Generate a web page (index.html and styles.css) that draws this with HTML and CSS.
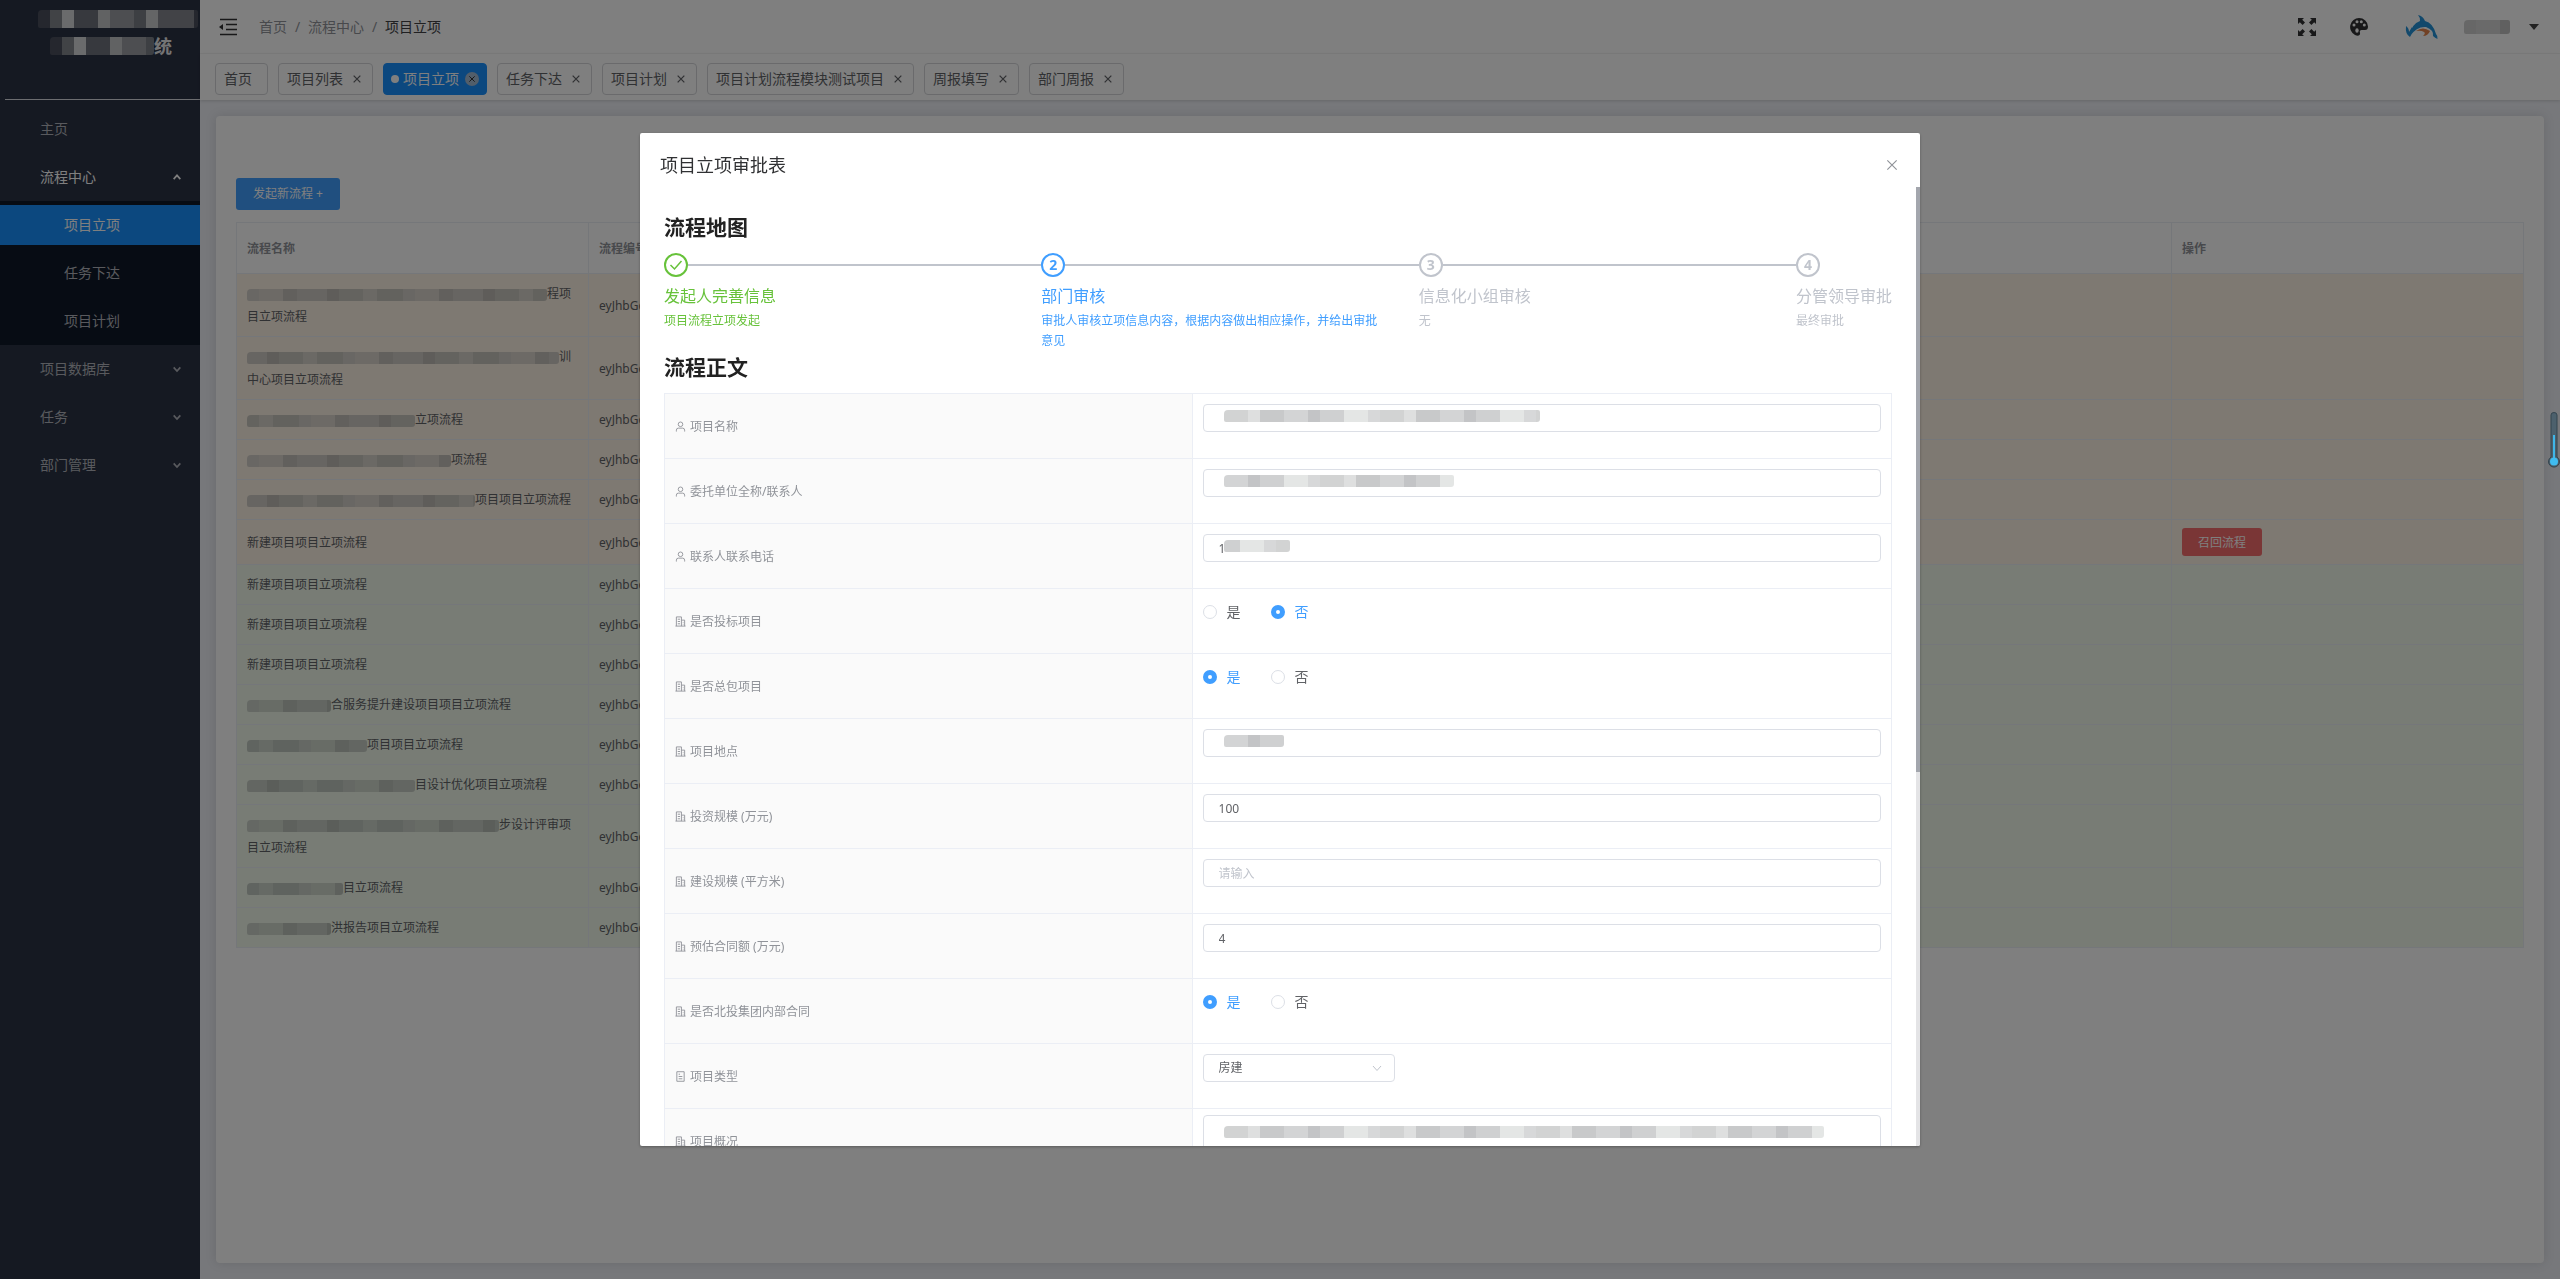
FILE: index.html
```html
<!DOCTYPE html>
<html lang="zh-CN">
<head>
<meta charset="utf-8">
<meta name="viewport" content="width=device-width, initial-scale=1">
<title>项目立项</title>
<link rel="stylesheet" href="styles.css">
</head>
<body>
<svg class="sprite" aria-hidden="true">
  <symbol id="i-user" viewBox="0 0 12 12"><circle cx="6" cy="3.6" r="2.5"/><path d="M1.5 11.5V10Q1.5 7.8 3.6 7.8H8.4Q10.5 7.8 10.5 10V11.5"/></symbol>
  <symbol id="i-office" viewBox="0 0 12 12"><path d="M0.5 11H11.5M1.5 11V1H7V11M7 4.5H10.5V11M3 3.5H5.5M3 6H5.5M3 8.5H5.5M8.5 7H9.2M8.5 9H9.2"/></symbol>
  <symbol id="i-ticket" viewBox="0 0 12 12"><path d="M2 0.8H10V11.2H2ZM4 3.5H5.5M4 6H8M4 8.5H8"/></symbol>
  <symbol id="i-down" viewBox="0 0 12 12"><path d="M2 4L6 8.5L10 4"/></symbol>
  <symbol id="i-up" viewBox="0 0 12 12"><path d="M2 8.5L6 4L10 8.5"/></symbol>
  <symbol id="i-close" viewBox="0 0 12 12"><path d="M2 2L10 10M10 2L2 10"/></symbol>
</svg>

<div class="app">
  <aside class="sidebar">
    <div class="logo">
      <span class="mask mask-logo" style="width:160px"></span>
      <div class="logo-line"><span class="mask mask-logo" style="width:104px"></span><b>统</b></div>
    </div>
    <nav class="menu">
      <a class="menu-item" href="#">主页</a>
      <a class="menu-item open" href="#">流程中心<svg class="ico"><use href="#i-up"/></svg></a>
      <div class="submenu">
        <a class="sub-item active" href="#">项目立项</a>
        <a class="sub-item" href="#">任务下达</a>
        <a class="sub-item" href="#">项目计划</a>
      </div>
      <a class="menu-item" href="#">项目数据库<svg class="ico"><use href="#i-down"/></svg></a>
      <a class="menu-item" href="#">任务<svg class="ico"><use href="#i-down"/></svg></a>
      <a class="menu-item" href="#">部门管理<svg class="ico"><use href="#i-down"/></svg></a>
    </nav>
  </aside>

  <div class="page">
    <header class="topbar">
      <button class="icon-btn" aria-label="收起菜单"><svg width="18" height="18" viewBox="0 0 18 18"><path d="M1 1.5H18M7 6.5H18M7 11.5H18M1 16.5H18" stroke="currentColor" stroke-width="1.500"/><path d="M0 9L4 6V12Z" fill="currentColor"/></svg></button>
      <nav class="crumbs"><a href="#">首页</a><i>/</i><a href="#">流程中心</a><i>/</i><span>项目立项</span></nav>
      <div class="tools">
        <button class="icon-btn" aria-label="全屏"><svg width="20" height="20" viewBox="0 0 20 20" fill="currentColor"><path d="M1 1H7L5.2 2.8L8 5.6L5.6 8L2.8 5.2L1 7ZM19 1V7L17.2 5.2L14.4 8L12 5.6L14.8 2.8L13 1ZM1 19V13L2.8 14.8L5.6 12L8 14.4L5.2 17.2L7 19ZM19 19H13L14.8 17.2L12 14.4L14.4 12L17.2 14.8L19 13Z"/></svg></button>
        <button class="icon-btn" aria-label="主题"><svg width="20" height="20" viewBox="0 0 20 20"><path d="M10 1A9 9 0 0 0 6 18Q9 19.500 10.500 18Q11.500 17 10.800 15Q10.500 13 12.500 13H16Q19 13 19 9.500A9 8.700 0 0 0 10 1Z" fill="currentColor"/><g fill="#fff"><circle cx="5" cy="8" r="1.500"/><circle cx="8" cy="4.800" r="1.500"/><circle cx="12.300" cy="4.800" r="1.500"/><circle cx="15.300" cy="8" r="1.500"/><ellipse cx="8" cy="13.500" rx="1.700" ry="2.200"/></g></svg></button>
        <svg class="avatar" width="34" height="26" viewBox="0 0 34 26"><path d="M5 22Q6 10 15 7Q15 3 13 1Q18 2 20 7Q28 9 31 20Q33 22 32.500 25Q30 24 28 22Q29 16 21 13Q12 12 5 22ZM5 23Q0 20 1 12Q4 14 4 18L7 13Q9 17 5 23Z" fill="#2492d8"/><path d="M11 17Q18 12 25 17Q23 22 18 22Q21 19 19 18Q16 16 11 17Z" fill="#e2834a"/></svg>
        <span class="mask mask-name" style="width:46px"></span>
        <svg width="10" height="6" viewBox="0 0 10 6"><path d="M0 0H10L5 6Z" fill="#444"/></svg>
      </div>
    </header>

    <nav class="tabs">
      <a class="tab" href="#">首页</a>
      <a class="tab" href="#">项目列表<svg class="ico"><use href="#i-close"/></svg></a>
      <a class="tab current" href="#"><span class="dot"></span>项目立项<svg class="ico round"><use href="#i-close"/></svg></a>
      <a class="tab" href="#">任务下达<svg class="ico"><use href="#i-close"/></svg></a>
      <a class="tab" href="#">项目计划<svg class="ico"><use href="#i-close"/></svg></a>
      <a class="tab" href="#">项目计划流程模块测试项目<svg class="ico"><use href="#i-close"/></svg></a>
      <a class="tab" href="#">周报填写<svg class="ico"><use href="#i-close"/></svg></a>
      <a class="tab" href="#">部门周报<svg class="ico"><use href="#i-close"/></svg></a>
    </nav>

    <main class="main">
      <section class="card">
        <button class="btn primary">发起新流程 +</button>
        <table class="list">
          <colgroup><col class="c-side"><col><col class="c-side"></colgroup>
          <thead><tr><th>流程名称</th><th>流程编号</th><th>操作</th></tr></thead>
          <tbody>
            <tr class="warn"><td><span class="mask" style="width:300px"></span>程项目立项流程</td><td>eyJhbGciOi</td><td></td></tr>
            <tr class="warn"><td><span class="mask b" style="width:312px"></span>训中心项目立项流程</td><td>eyJhbGciOi</td><td></td></tr>
            <tr class="warn"><td><span class="mask c" style="width:168px"></span>立项流程</td><td>eyJhbGciOi</td><td></td></tr>
            <tr class="warn"><td><span class="mask" style="width:204px"></span>项流程</td><td>eyJhbGciOi</td><td></td></tr>
            <tr class="warn"><td><span class="mask b" style="width:228px"></span>项目项目立项流程</td><td>eyJhbGciOi</td><td></td></tr>
            <tr class="warn"><td>新建项目项目立项流程</td><td>eyJhbGciOi</td><td><button class="btn danger">召回流程</button></td></tr>
            <tr class="ok"><td>新建项目项目立项流程</td><td>eyJhbGciOi</td><td></td></tr>
            <tr class="ok"><td>新建项目项目立项流程</td><td>eyJhbGciOi</td><td></td></tr>
            <tr class="ok"><td>新建项目项目立项流程</td><td>eyJhbGciOi</td><td></td></tr>
            <tr class="ok"><td><span class="mask" style="width:84px"></span>合服务提升建设项目项目立项流程</td><td>eyJhbGciOi</td><td></td></tr>
            <tr class="ok"><td><span class="mask c" style="width:120px"></span>项目项目立项流程</td><td>eyJhbGciOi</td><td></td></tr>
            <tr class="ok"><td><span class="mask b" style="width:168px"></span>目设计优化项目立项流程</td><td>eyJhbGciOi</td><td></td></tr>
            <tr class="ok"><td><span class="mask" style="width:252px"></span>步设计评审项目立项流程</td><td>eyJhbGciOi</td><td></td></tr>
            <tr class="ok"><td><span class="mask c" style="width:96px"></span>目立项流程</td><td>eyJhbGciOi</td><td></td></tr>
            <tr class="ok"><td><span class="mask" style="width:84px"></span>洪报告项目立项流程</td><td>eyJhbGciOi</td><td></td></tr>
          </tbody>
        </table>
      </section>
    </main>
  </div>
</div>

<div class="overlay">
  <div class="dialog" role="dialog" aria-labelledby="dlg-title">
    <div class="dialog-head">
      <span class="dialog-title" id="dlg-title">项目立项审批表</span>
      <button class="close" aria-label="关闭"><svg class="ico"><use href="#i-close"/></svg></button>
    </div>
    <div class="dialog-body">
      <h2>流程地图</h2>
      <ol class="steps">
        <li class="done"><div class="step-head"><b><svg width="14" height="12" viewBox="0 0 14 12"><path d="M1.500 6L5.500 10L12.500 2" fill="none" stroke="currentColor" stroke-width="1.500"/></svg></b></div><div class="step-title">发起人完善信息</div><div class="step-desc">项目流程立项发起</div></li>
        <li class="now"><div class="step-head"><b>2</b></div><div class="step-title">部门审核</div><div class="step-desc">审批人审核立项信息内容，根据内容做出相应操作，并给出审批意见</div></li>
        <li><div class="step-head"><b>3</b></div><div class="step-title">信息化小组审核</div><div class="step-desc">无</div></li>
        <li><div class="step-head"><b>4</b></div><div class="step-title">分管领导审批</div><div class="step-desc">最终审批</div></li>
      </ol>
      <h2>流程正文</h2>
      <table class="form">
        <tbody>
        <tr><th><label for="f1"><svg class="ico"><use href="#i-user"/></svg>项目名称</label></th><td><div class="field"><input id="f1" type="text"><span class="mask soft" style="width:316px"></span></div></td></tr>
        <tr><th><label for="f2"><svg class="ico"><use href="#i-user"/></svg>委托单位全称/联系人</label></th><td><div class="field"><input id="f2" type="text"><span class="mask soft b" style="width:230px"></span></div></td></tr>
        <tr><th><label for="f3"><svg class="ico"><use href="#i-user"/></svg>联系人联系电话</label></th><td><div class="field"><input id="f3" type="text" value="1"><span class="mask soft c" style="width:66px"></span></div></td></tr>
        <tr><th><svg class="ico"><use href="#i-office"/></svg>是否投标项目</th><td><div class="radios"><label><input type="radio" name="r1">是</label><label><input type="radio" name="r1" checked>否</label></div></td></tr>
        <tr><th><svg class="ico"><use href="#i-office"/></svg>是否总包项目</th><td><div class="radios"><label><input type="radio" name="r2" checked>是</label><label><input type="radio" name="r2">否</label></div></td></tr>
        <tr><th><label for="f6"><svg class="ico"><use href="#i-office"/></svg>项目地点</label></th><td><div class="field"><input id="f6" type="text"><span class="mask soft b" style="width:60px"></span></div></td></tr>
        <tr><th><label for="f7"><svg class="ico"><use href="#i-office"/></svg>投资规模 (万元)</label></th><td><input id="f7" type="text" value="100"></td></tr>
        <tr><th><label for="f8"><svg class="ico"><use href="#i-office"/></svg>建设规模 (平方米)</label></th><td><input id="f8" type="text" placeholder="请输入"></td></tr>
        <tr><th><label for="f9"><svg class="ico"><use href="#i-office"/></svg>预估合同额 (万元)</label></th><td><input id="f9" type="text" value="4"></td></tr>
        <tr><th><svg class="ico"><use href="#i-office"/></svg>是否北投集团内部合同</th><td><div class="radios"><label><input type="radio" name="r3" checked>是</label><label><input type="radio" name="r3">否</label></div></td></tr>
        <tr><th><label for="f11"><svg class="ico"><use href="#i-ticket"/></svg>项目类型</label></th><td><div class="select"><select id="f11"><option>房建</option></select><svg class="ico"><use href="#i-down"/></svg></div></td></tr>
        <tr><th><label for="f12"><svg class="ico"><use href="#i-office"/></svg>项目概况</label></th><td class="long"><div class="field"><textarea id="f12"></textarea><span class="mask soft" style="width:600px"></span></div></td></tr>
        </tbody>
      </table>
    </div>
    <div class="scrollbar"><div class="thumb"></div></div>
  </div>
</div>

<svg class="gauge" width="12" height="56" viewBox="0 0 12 56" aria-hidden="true"><path d="M3 3Q3 0.500 6 0.500Q9 0.500 9 3V45A5.500 5.500 0 1 1 3 45Z" fill="#4c606c" stroke="#33454f"/><path d="M6 23V48" stroke="#3fb6e8" stroke-width="2"/><circle cx="6" cy="49.500" r="4" fill="#3fbcf0"/></svg>
</body>
</html>
```
FILE: styles.css
```css
* { box-sizing: border-box; }
body {
  margin: 0;
  font: 14px/20px "Noto Sans", "Noto Sans CJK SC", sans-serif;
  color: #606266;
  background: #eef0f6;
}
a { color: inherit; text-decoration: none; }
button, input, select, textarea { font: inherit; color: inherit; margin: 0; }
button { padding: 0; border: 0; background: none; }
.sprite { display: none; }
.ico { width: 12px; height: 12px; fill: none; stroke: currentColor; stroke-width: 1; flex: none; }

/* redacted strips */
.mask {
  display: inline-block;
  height: 12px;
  vertical-align: middle;
  border-radius: 4px 2px 3px 2px;
  background: linear-gradient(90deg, #d3cfc8 0 12px, #dad5cd 12px 36px, #c4c1ba 36px 50px, #cfcbc4 50px 80px, #bebbb4 80px 92px, #c9c6bf 92px 116px, #d6d2ca 116px 130px, #c7c4bd 130px 156px) 0 0 / 156px 100%;
}
.mask.b { background-position: -60px 0; }
.mask.c { background-position: -104px 0; }
.ok .mask { filter: hue-rotate(60deg); }
.mask.soft {
  background-image: linear-gradient(90deg, #d2d3d3 0 24px, #dedfdf 24px 36px, #c8c9ca 36px 60px, #d3d4d5 60px 84px, #c3c4c6 84px 96px, #cfd0d1 96px 120px, #e4e6e5 120px 144px, #d7d8d9 144px 156px);
}

.app { display: flex; min-height: 100vh; }

/* sidebar */
.sidebar { width: 200px; flex: none; background: #2b3245; color: #b2b5bc; }
.logo {
  height: 100px;
  margin-left: 5px;
  padding: 8px 0 0 33px;
  border-bottom: 1px solid #d8dae0;
  line-height: 20px;
}
.logo .mask { height: 18px; }
.logo-line { display: flex; align-items: center; padding: 8px 0 0 12px; font-size: 18px; color: #e8e8ea; }
.mask-logo {
  background: linear-gradient(90deg, #4a4f5c 0 12px, #83868d 12px 24px, #d5d6d8 24px 36px, #6f737c 36px 60px, #c2c4c7 60px 72px, #9b9da3 72px 96px, #7b7f87 96px 108px, #c8cacc 108px 120px, #84878e 120px 156px) 0 0 / 156px 100%;
}
.menu { padding-top: 5px; }
.menu-item {
  display: flex;
  align-items: center;
  justify-content: space-between;
  height: 48px;
  padding: 0 18px 0 40px;
}
.menu-item.open { color: #fff; }
.menu-item .ico { width: 10px; height: 10px; stroke-width: 2; }
.submenu { display: flex; flex-direction: column; gap: 8px; padding: 4px 0; background: #0f1828; }
.sub-item { height: 40px; padding-left: 64px; line-height: 40px; }
.sub-item.active { background: #1890ff; color: #fff; }

/* header */
.page { flex: 1; min-width: 0; display: flex; flex-direction: column; }
.topbar {
  display: flex;
  align-items: center;
  height: 54px;
  padding: 0 21px 0 19px;
  background: #fff;
  border-bottom: 1px solid #f6f6f6;
}
.icon-btn { display: flex; color: #303133; }
.crumbs { display: flex; margin-left: 22px; color: #909399; }
.crumbs i { width: 21px; text-align: center; font-style: normal; }
.crumbs span { color: #404145; }
.tools { display: flex; align-items: center; margin-left: auto; }
.tools .icon-btn { margin-right: 32px; }
.avatar { margin: 0 25px 0 4px; }
.mask-name { height: 14px; margin-right: 19px; filter: grayscale(1); }
.tabs {
  display: flex;
  gap: 10px;
  height: 46px;
  padding: 9px 15px 5px;
  background: #fff;
  box-shadow: 0 1px 3px rgba(0, 0, 0, .15);
}
.tab {
  display: flex;
  align-items: center;
  height: 32px;
  padding: 0 10px 0 8px;
  border: 1px solid #d4d5d9;
  border-radius: 4px;
}
.tab:first-child { padding-right: 15px; }
.tab .ico { width: 10px; height: 10px; margin-left: 9px; stroke-width: 1.5; }
.tab.current { padding: 0 7px; background: #1890ff; border-color: #1890ff; color: #fff; }
.dot { width: 8px; height: 8px; margin-right: 4px; border-radius: 50%; background: #fff; }
.tab .round { width: 14px; height: 14px; margin-left: 6px; padding: 3px; border-radius: 50%; background: #a5bcd4; color: #333; }

/* list */
.main { flex: 1; display: flex; padding: 16px; }
.card {
  flex: 1;
  min-width: 0;
  padding: 62px 20px 20px;
  background: #fff;
  border-radius: 4px;
  box-shadow: 0 0 12px rgba(0, 0, 0, .12);
}
.btn { height: 32px; padding: 0 15px; border-radius: 3px; font-size: 12px; color: #fff; display: block; }
.primary { background: #409eff; margin-bottom: 12px; min-width: 104px; }
.danger { height: 28px; width: 80px; background: #f56c6c; }
table { border-collapse: collapse; table-layout: fixed; width: 100%; }
.list { font-size: 12px; line-height: 23px; border: 1px solid #ebeef5; }
.c-side { width: 352px; }
.list th, .list td { border: 1px solid #ebeef5; padding: 8px 10px; text-align: left; overflow: hidden; }
.list th { height: 51px; color: #909399; font-weight: 700; }
.warn { background: #fdf2e4; }
.ok { background: #f0f9eb; }

/* dialog */
.overlay {
  position: fixed;
  inset: 0;
  padding: 133px 0;
  background: rgba(0, 0, 0, .5);
}
.dialog {
  position: relative;
  display: flex;
  flex-direction: column;
  width: 50%;
  max-height: 100%;
  margin: 0 auto;
  overflow: hidden;
  background: #fff;
  border-radius: 2px;
  box-shadow: 0 1px 3px rgba(0, 0, 0, .3);
}
.dialog-head { display: flex; align-items: center; justify-content: space-between; padding: 20px 20px 10px; }
.dialog-title { font-size: 18px; line-height: 24px; color: #303133; }
.close { display: flex; padding: 1px; color: #909399; }
.close .ico { width: 14px; height: 14px; }
.dialog-body { flex: 1; min-height: 0; overflow-y: auto; scrollbar-width: none; padding: 24px 28px 24px 24px; }
.scrollbar { position: absolute; top: 54px; right: 0; bottom: 0; width: 4px; background: #e4e4e6; }
.thumb { height: 61%; background: #a3a6ad; }
h2 { margin: 0; padding: 4px 0 14px; font-size: 21px; line-height: 24px; color: #222; }

.steps { display: flex; margin: 0; padding: 0; list-style: none; color: #c0c4cc; }
.steps li { flex: 1; min-width: 0; }
.steps li:last-child { flex: none; }
.step-head { display: flex; align-items: center; }
.step-head b { display: flex; align-items: center; justify-content: center; width: 24px; height: 24px; border: 2px solid currentColor; border-radius: 50%; }
.step-head::after { content: ""; flex: 1; height: 2px; background: #c0c4cc; }
.steps li:last-child .step-head::after { content: none; }
.step-title { font-size: 16px; line-height: 34px; padding-top: 2px; }
.step-desc { padding-right: 10%; font-size: 12px; line-height: 20px; margin-top: -2px; }
.done { color: #67c23a; }
.now { color: #409eff; }

.form { font-size: 12px; }
.form th, .form td { height: 65px; border: 1px solid #ebeef5; padding: 10px; text-align: left; }
.form th { width: 43%; padding-top: 12px; background: #fafafa; color: #909399; font-weight: 400; }
.form th .ico { width: 11px; height: 11px; margin-right: 4px; vertical-align: -1px; }
.form td { vertical-align: top; }
.form td.long { padding-top: 6px; padding-bottom: 0; }
.form input[type="text"], select, textarea {
  display: block;
  width: 100%;
  height: 28px;
  padding: 0 15px;
  border: 1px solid #dcdfe6;
  border-radius: 4px;
  background: #fff;
  appearance: none;
}
.form input::placeholder { color: #c0c4cc; }
.form textarea { height: 54px; resize: none; }
.form td.long .field { height: 54px; }
.field { position: relative; }
.field .mask { position: absolute; top: 6px; left: 21px; }
.long .field .mask { top: 11px; }
.select { position: relative; width: 192px; }
.select .ico { position: absolute; top: 8px; right: 12px; color: #c0c4cc; }
.radios { display: flex; gap: 30px; font-size: 14px; line-height: 26px; }
.radios label { display: flex; align-items: center; gap: 10px; }
.radios label:has(:checked) { color: #409eff; }
.radios input { appearance: none; width: 14px; height: 14px; border: 1px solid #dcdfe6; border-radius: 50%; background: #fff; }
.radios input:checked { border: 5px solid #409eff; }

.gauge { position: fixed; right: 0; top: 412px; }
```
